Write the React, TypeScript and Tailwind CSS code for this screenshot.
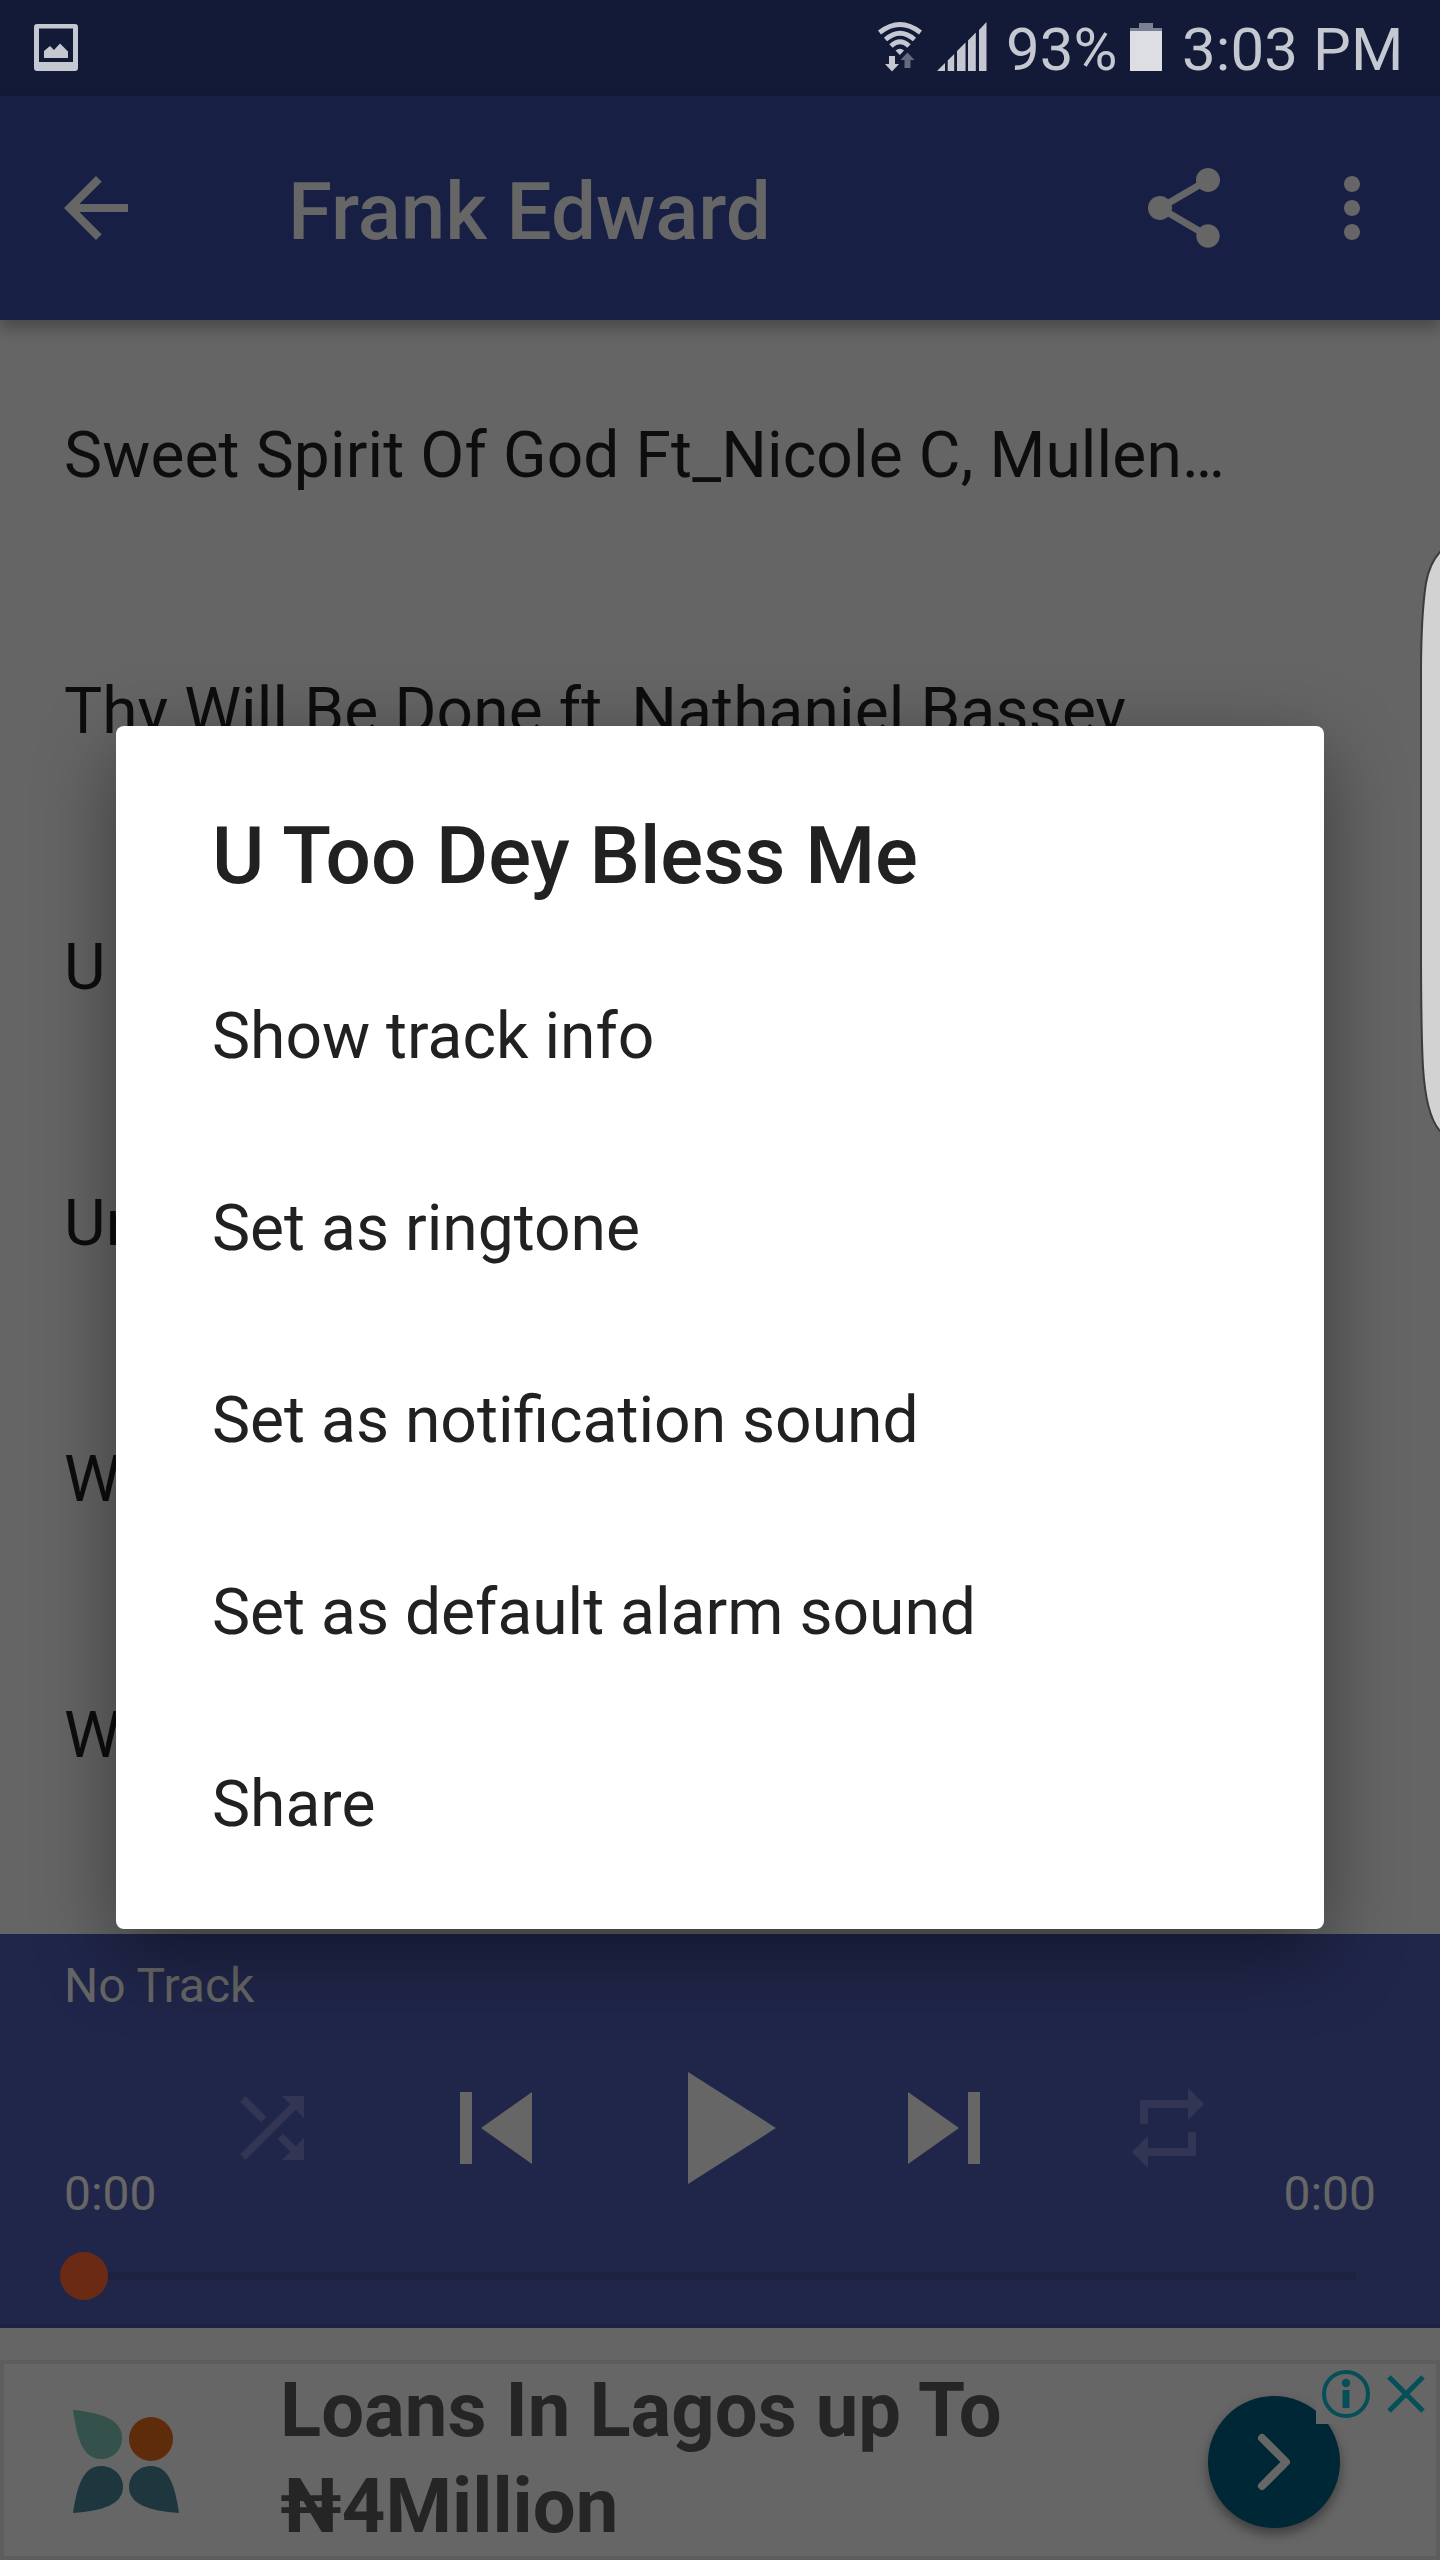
import React from "react";

const tracks = [
  "Sweet Spirit Of God Ft_Nicole C, Mullen…",
  "Thy Will Be Done ft_Nathaniel Bassey",
  "U Too Dey Bless Me",
  "Under The Canopy",
  "We Worship You",
  "Wonderful",
];

const actions = [
  "Show track info",
  "Set as ringtone",
  "Set as notification sound",
  "Set as default alarm sound",
  "Share",
];

function Icon({ d, className }: { d: string; className: string }) {
  return (
    <svg viewBox="0 0 24 24" className={className} fill="currentColor">
      <path d={d} />
    </svg>
  );
}

function StatusBar() {
  return (
    <div className="flex h-24 shrink-0 items-start bg-[#131a38] text-[#c5c8d1]">
      <svg viewBox="0 0 44 48" className="mt-[24px] ml-[34px] h-[48px] w-[44px]" fill="currentColor">
        <path fillRule="evenodd" d="M3 0h38q3 0 3 3v41q0 3-3 3H3q-3 0-3-3V3q0-3 3-3zM5 4.500v33.500h34V4.500z" />
        <path d="M10 34v-7l6-5 4 4 6-6.500 8 8V34z" />
      </svg>
      <svg viewBox="0 0 44 50" className="mt-[22px] ml-[800px] h-[50px] w-[44px]" fill="none">
        <g stroke="currentColor" strokeWidth="4.800">
          <path d="M1.500 10.500Q22-5.500 42.500 10.500" />
          <path d="M7.500 17.500Q22 5 36.500 17.500" />
          <path d="M13 24Q22 15.500 31 24" />
        </g>
        <path d="M17.500 28.500Q22 25 26 28.500L21.800 33z" fill="currentColor" />
        <path d="M11 34h6v8h4l-7 7.500L7 42h4z" fill="currentColor" />
        <path d="M26.500 46v-8h-4l7-7.500 7 7.500h-4v8z" fill="#656a80" />
      </svg>
      <svg viewBox="0 0 50 50" className="mt-[22px] ml-[15px] h-[50px] w-[50px]" fill="currentColor">
        <path d="M0 49L8 41v8zM10.700 38.500l6.500-6.500V49h-6.500zM20 29l8.500-8.500V49H20zM31 18.500l7.800-8V49H31zM42 8l7.500-8v49H42z" />
      </svg>
      <span className="mt-[15px] ml-[19px] w-[115px] text-[60px]/[70px]">93%</span>
      <svg viewBox="0 0 32 48" className="mt-[23px] ml-[9px] h-[48px] w-[32px]">
        <path d="M9 0h14v5h9v4H0V5h9z" fill="#7c8094" />
        <path d="M0 8h32v40H0z" fill="#dcdee4" />
      </svg>
      <span className="mt-[15px] ml-[20px] text-[60px]/[70px] tracking-[0.1px] whitespace-nowrap">3:03 PM</span>
    </div>
  );
}

function Toolbar() {
  return (
    <header className="relative z-10 flex h-56 shrink-0 items-center bg-[#181f45] pr-10 pl-12 text-[#666666] shadow-[0_8px_14px_rgba(0,0,0,0.28)]">
      <Icon className="size-24" d="M20 11H7.830l5.590-5.590L12 4l-8 8 8 8 1.410-1.410L7.830 13H20v-2z" />
      <h1 className="ml-36 grow pt-2 text-[80px]/[96px] font-medium tracking-[-0.1px]">Frank Edward</h1>
      <Icon
        className="mr-[72px] size-24"
        d="M18 16.080c-.76 0-1.440.3-1.960.77L8.910 12.700c.05-.23.090-.46.090-.7s-.04-.47-.09-.7l7.050-4.110c.54.5 1.250.81 2.040.81 1.660 0 3-1.340 3-3s-1.340-3-3-3-3 1.340-3 3c0 .24.04.47.09.7L8.040 9.810C7.500 9.310 6.790 9 6 9c-1.660 0-3 1.340-3 3s1.340 3 3 3c.79 0 1.500-.31 2.040-.81l7.120 4.160c-.05.21-.08.43-.08.65 0 1.610 1.310 2.920 2.920 2.920s2.920-1.310 2.920-2.920-1.310-2.920-2.920-2.920z"
      />
      <Icon
        className="size-24"
        d="M12 8c1.100 0 2-.9 2-2s-.9-2-2-2-2 .9-2 2 .9 2 2 2zm0 2c-1.100 0-2 .9-2 2s.9 2 2 2 2-.9 2-2-.9-2-2-2zm0 6c-1.100 0-2 .9-2 2s.9 2 2 2 2-.9 2-2-.9-2-2-2z"
      />
    </header>
  );
}

function Player() {
  return (
    <section className="flex h-[394px] shrink-0 flex-col border-b-4 border-[#1e2143] bg-[#20264a] text-[#666666]">
      <p className="mt-[24px] ml-16 h-14 text-[48px]/[56px]">No Track</p>
      <div className="mt-[18px] flex h-48 items-center justify-center">
        <div className="flex w-56 justify-center text-[#323554]">
          <Icon className="size-24" d="M10.590 9.170L5.410 4 4 5.410l5.170 5.170 1.420-1.410zM14.500 4l2.040 2.040L4 18.590 5.410 20 17.960 7.460 20 9.500V4h-5.500zm.33 9.410l-1.410 1.410 3.130 3.130L14.500 20H20v-5.500l-2.040 2.040-3.130-3.130z" />
        </div>
        <div className="flex w-56 justify-center">
          <Icon className="size-36" d="M6 6h2v12H6zm3.500 6l8.500 6V6z" />
        </div>
        <div className="flex w-56 justify-center">
          <Icon className="size-48" d="M8 5v14l11-7z" />
        </div>
        <div className="flex w-56 justify-center">
          <Icon className="size-36" d="M6 18l8.500-6L6 6v12zM16 6v12h2V6h-2z" />
        </div>
        <div className="flex w-56 justify-center text-[#323554]">
          <Icon className="size-24" d="M7 7h10v3l4-4-4-4v3H5v6h2V7zm10 10H7v-3l-4 4 4 4v-3h12v-6h-2v4z" />
        </div>
      </div>
      <div className="-mt-[58px] flex h-14 justify-between px-16 text-[48px]/[56px]">
        <span>0:00</span>
        <span>0:00</span>
      </div>
      <div className="mt-[30px] mr-[84px] ml-[60px] flex h-12 items-center">
        <div className="size-12 rounded-full bg-[#6b2a14]" />
        <div className="h-2 grow bg-[#1c2240]" />
      </div>
    </section>
  );
}

function AdBanner() {
  return (
    <aside className="relative mt-8 flex h-[200px] shrink-0 items-center border-4 border-[#5d5d5d] bg-[#666666] text-[#252525]">
      <svg viewBox="0 0 106 104" className="mt-1 ml-[69px] h-[104px] w-[106px]">
        <path d="M0 0C30 3 49 10 49 28C49 40 40 49 28 49C8 49 4 25 0 0z" fill="#34524b" />
        <circle cx="78" cy="29" r="22" fill="#5e2c0a" />
        <path d="M0 103C4 76 10 56 28 56C40 56 50 65 50 77C50 94 30 101 0 103z" fill="#1e373f" />
        <path d="M106 103C102 76 96 56 78 56C66 56 56 65 56 77C56 94 76 101 106 103z" fill="#1e373f" />
      </svg>
      <p className="-mt-1 ml-[101px] text-[76px]/[96px] font-bold tracking-[0.05px] whitespace-nowrap">
        Loans In Lagos up To
        <br />
        ₦4Million
      </p>
      <div className="absolute top-[32px] right-[96px] flex size-[132px] items-center justify-center rounded-full bg-[#002736] shadow-[0_6px_12px_rgba(0,0,0,0.4)]">
        <svg viewBox="0 0 36 60" className="h-[60px] w-9" fill="none" stroke="#666666" strokeWidth="8" strokeLinecap="round" strokeLinejoin="round">
          <path d="M6 6l24 24L6 54" />
        </svg>
      </div>
      <div className="absolute top-0 right-0 flex h-[60px] w-[120px] items-center gap-[17px] bg-[#666666] pl-[6px]">
        <svg viewBox="0 0 48 48" className="size-12" fill="none" stroke="#054f58" strokeWidth="4">
          <circle cx="24" cy="24" r="22" />
          <circle cx="24" cy="13" r="4.200" fill="#054f58" stroke="none" />
          <path d="M24 20v18" strokeWidth="7" />
        </svg>
        <svg viewBox="0 0 38 38" className="size-[38px]" fill="none" stroke="#054f58" strokeWidth="5">
          <path d="M2 2l34 34M36 2L2 36" />
        </svg>
      </div>
    </aside>
  );
}

export default function App() {
  return (
    <div className="relative flex h-[2560px] w-[1440px] flex-col overflow-hidden bg-[#656565] font-['Roboto',sans-serif]">
      <StatusBar />
      <Toolbar />
      <main className="h-[1614px] shrink-0 overflow-hidden pt-[8px] text-[#0d0d0d]">
        {tracks.map((t) => (
          <div key={t} className="flex h-64 items-center px-16 text-[64px]/[76px] tracking-[0.15px] whitespace-nowrap">
            {t}
          </div>
        ))}
      </main>
      <Player />
      <AdBanner />

      <div className="absolute top-[726px] left-[116px] flex h-[1203px] w-[1208px] flex-col rounded-lg bg-white px-24 text-[#212121] shadow-[0_24px_80px_rgba(0,0,0,0.42)]">
        <h2 className="mt-[82px] h-24 text-[80px]/[96px] font-medium tracking-[-0.05px]">U Too Dey Bless Me</h2>
        <ul className="mt-[36px]">
          {actions.map((a) => (
            <li key={a} className="flex h-48 items-center text-[64.15px]/[76px]">
              {a}
            </li>
          ))}
        </ul>
      </div>

      <svg viewBox="0 0 20 600" className="absolute top-[540px] right-0 h-[600px] w-5">
        <path
          d="M21 11C12 20 8 32 6 43C3 62 1.200 85 1 130V420C1.200 480 2 510 3 527C5 560 11 582 21 592z"
          fill="#d2d2d2"
          stroke="#3c3c3c"
          strokeWidth="2"
        />
      </svg>
    </div>
  );
}
